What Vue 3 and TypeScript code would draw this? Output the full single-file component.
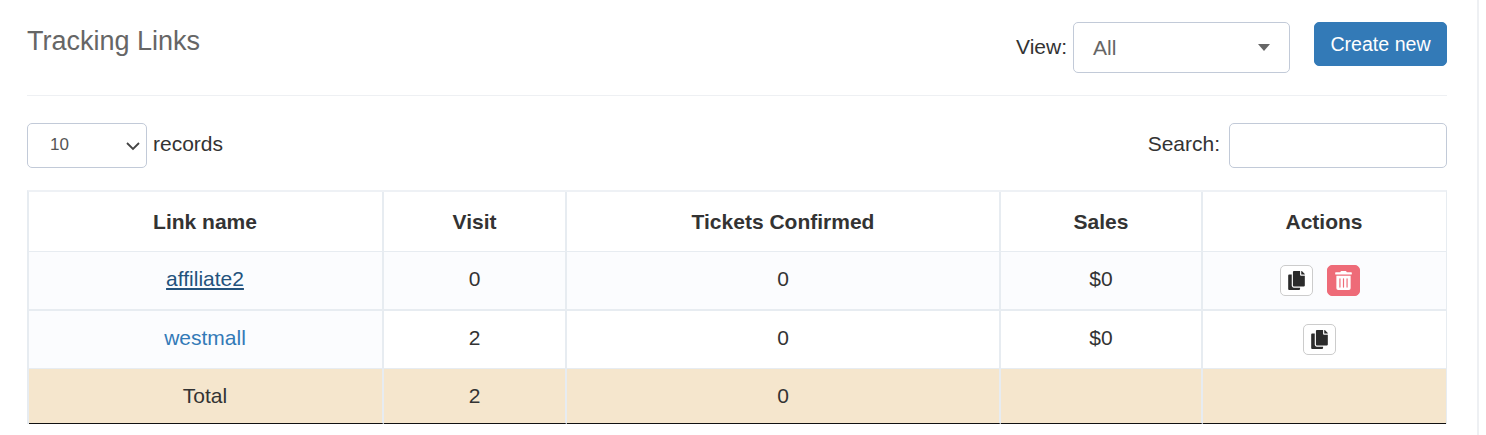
<script setup lang="ts">
interface LinkRow {
  name: string
  visit: number
  confirmed: number
  sales: string
  canDelete: boolean
  active?: boolean
}

const rows: LinkRow[] = [
  { name: 'affiliate2', visit: 0, confirmed: 0, sales: '$0', canDelete: true, active: true },
  { name: 'westmall', visit: 2, confirmed: 0, sales: '$0', canDelete: false }
]
</script>

<template>
  <div class="page">
    <div class="panel">
      <header class="top">
        <h2 class="title">Tracking Links</h2>
        <div class="top-right">
          <label class="view-label">View:</label>
          <div class="view-select">
            <span>All</span>
            <i class="caret"></i>
          </div>
          <button class="create">Create new</button>
        </div>
      </header>

      <div class="controls">
        <div class="length">
          <div class="length-select">
            <span>10</span>
            <svg width="14" height="14" viewBox="0 0 14 14"><path d="M1 4 7 10l6-6" fill="none" stroke="#444" stroke-width="1.8" /></svg>
          </div>
          <span class="label">records</span>
        </div>
        <div class="search">
          <span class="label">Search:</span>
          <input type="text" />
        </div>
      </div>

      <table class="links">
        <colgroup>
          <col style="width: 355px" />
          <col style="width: 183px" />
          <col style="width: 434px" />
          <col style="width: 202px" />
          <col />
        </colgroup>
        <thead>
          <tr>
            <th>Link name</th>
            <th>Visit</th>
            <th>Tickets Confirmed</th>
            <th>Sales</th>
            <th>Actions</th>
          </tr>
        </thead>
        <tbody>
          <tr v-for="(row, i) in rows" :key="row.name" :class="{ odd: i === 0 }">
            <td class="sorted"><a :class="{ active: row.active }" href="#">{{ row.name }}</a></td>
            <td>{{ row.visit }}</td>
            <td>{{ row.confirmed }}</td>
            <td>{{ row.sales }}</td>
            <td>
              <div class="actions">
                <button class="icon-btn">
                  <svg width="17" height="19" viewBox="0 0 448 512">
                    <path fill="#2b2b2b" d="M320 448v40c0 13.255-10.745 24-24 24H24c-13.255 0-24-10.745-24-24V120c0-13.255 10.745-24 24-24h72v296c0 30.879 25.121 56 56 56h168zm0-344V0H152c-13.255 0-24 10.745-24 24v368c0 13.255 10.745 24 24 24h272c13.255 0 24-10.745 24-24V128H344c-13.2 0-24-10.8-24-24zm120.971-31.029L375.029 7.029A24 24 0 0 0 358.059 0H352v96h96v-6.059a24 24 0 0 0-7.029-16.97z" />
                  </svg>
                </button>
                <button v-if="row.canDelete" class="icon-btn danger">
                  <svg width="17" height="19" viewBox="0 0 448 512">
                    <path fill="#fff" d="M32 464a48 48 0 0 0 48 48h288a48 48 0 0 0 48-48V128H32zm272-256a16 16 0 0 1 32 0v224a16 16 0 0 1-32 0zm-96 0a16 16 0 0 1 32 0v224a16 16 0 0 1-32 0zm-96 0a16 16 0 0 1 32 0v224a16 16 0 0 1-32 0zM432 32H312l-9.4-18.7A24 24 0 0 0 281.1 0H166.8a23.72 23.72 0 0 0-21.4 13.3L136 32H16A16 16 0 0 0 0 48v32a16 16 0 0 0 16 16h416a16 16 0 0 0 16-16V48a16 16 0 0 0-16-16z" />
                  </svg>
                </button>
              </div>
            </td>
          </tr>
          <tr class="total">
            <td>Total</td>
            <td>2</td>
            <td>0</td>
            <td></td>
            <td></td>
          </tr>
        </tbody>
      </table>
    </div>
  </div>
</template>

<style>
html, body {
  background: #fff;
}
</style>

<style scoped>
.page {
  width: 1479px;
  height: 435px;
  box-sizing: border-box;
  border-right: 2px solid #eef0f3;
  padding: 0 30px 0 27px;
  font-family: "Liberation Sans", Arial, sans-serif;
  font-size: 21px;
  color: #333;
  overflow: hidden;
}

.top {
  height: 95px;
  display: flex;
  justify-content: space-between;
  align-items: flex-start;
  border-bottom: 1px solid #eef0f3;
  box-sizing: content-box;
}

.title {
  margin: 26px 0 0;
  font-size: 27px;
  line-height: 30px;
  font-weight: 400;
  color: #666;
}

.top-right {
  display: flex;
  align-items: flex-start;
  padding-top: 22px;
}

.view-label {
  margin: 11px 6px 0 0;
  line-height: 27px;
  color: #333;
}

.view-select {
  width: 217px;
  height: 51px;
  box-sizing: border-box;
  border: 1px solid #c2cad8;
  border-radius: 5px;
  padding: 0 19px;
  display: flex;
  align-items: center;
  justify-content: space-between;
  color: #666;
}

.caret {
  width: 0;
  height: 0;
  border-left: 6px solid transparent;
  border-right: 6px solid transparent;
  border-top: 7px solid #666;
}

.create {
  margin-left: 24px;
  width: 133px;
  height: 44px;
  border: 1px solid #337ab7;
  border-radius: 5px;
  background: #337ab7;
  color: #fff;
  font: inherit;
  font-size: 19.6px;
  padding: 0;
}

.controls {
  display: flex;
  justify-content: space-between;
  align-items: center;
  margin: 27px 0 22px;
  line-height: 40px;
}

.label {
  padding-bottom: 3px;
}

.length,
.search {
  display: flex;
  align-items: center;
}

.length-select {
  width: 120px;
  height: 45px;
  box-sizing: border-box;
  border: 1px solid #c2cad8;
  border-radius: 5px;
  padding: 0 6px 2px 22px;
  margin-right: 6px;
  display: flex;
  align-items: center;
  justify-content: space-between;
  font-size: 17px;
  color: #555;
}

.length-select svg {
  margin-top: 2px;
}

.search input {
  width: 218px;
  height: 45px;
  box-sizing: border-box;
  border: 1px solid #c2cad8;
  border-radius: 5px;
  margin-left: 9px;
  outline: none;
}

.links {
  width: 1420px;
  border-collapse: separate;
  border-spacing: 0;
  table-layout: fixed;
  border-top: 2px solid #eef1f5;
  border-left: 2px solid #e7ecf1;
  border-right: 1px solid #e7ecf1;
}

.links th,
.links td {
  text-align: center;
  border-right: 2px solid #e7ecf1;
  border-bottom: 1px solid #e7ecf1;
  padding: 0;
}

.links th:first-child,
.links td:first-child {
  padding-right: 1px;
}

.links th:last-child,
.links td:last-child {
  border-right: none;
  padding-right: 1px;
}

.links th {
  height: 58px;
  padding-top: 1px;
  font-weight: 700;
  color: #333;
}

.links td {
  height: 57px;
}

/* text in the two data rows sits a bit above the middle of the cell */
.links tbody tr:not(.total) td:not(:last-child) {
  height: 54px;
  padding-bottom: 3px;
}

.links tr.odd td {
  background: #fbfcfe;
  border-bottom-width: 2px;
}

.links td.sorted {
  background: #fbfcfe;
}

.links a {
  color: #337ab7;
  text-decoration: none;
}

.links a.active {
  color: #23527c;
  text-decoration: underline;
}

.links tr.total td {
  background: #f5e6cd;
  height: 54px;
  border-bottom: 1px solid #111;
}

.actions {
  display: flex;
  justify-content: center;
  gap: 14px;
  padding-right: 9px;
}

.icon-btn {
  width: 33px;
  height: 31px;
  box-sizing: border-box;
  border: 1px solid #ccc;
  border-radius: 5px;
  background: #fff;
  padding: 0;
  display: flex;
  align-items: center;
  justify-content: center;
}

.icon-btn.danger {
  background: #ee6b78;
  border-color: #ee6b78;
}
</style>
